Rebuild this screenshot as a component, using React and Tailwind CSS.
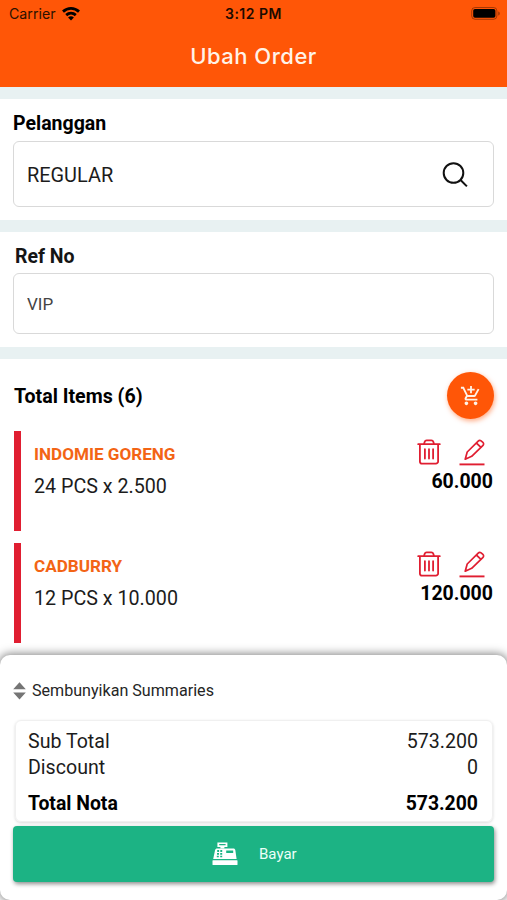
import { useState } from "react"
import { MdAddShoppingCart } from "react-icons/md"

const items = [
  { id: 1, name: "INDOMIE GORENG", detail: "24 PCS x 2.500", total: "60.000" },
  { id: 2, name: "CADBURRY", detail: "12 PCS x 10.000", total: "120.000" },
]

function WifiIcon() {
  return (
    <svg className="h-[14px] w-[18px]" viewBox="0 0 18 14" fill="none" stroke="currentColor" strokeWidth="2.8">
      <path d="M1 4.6C5.6 .4 12.4 .4 17 4.6" />
      <path d="M4.2 8.1c2.8-2.5 6.800-2.500 9.600 0" />
      <path d="M9 13.500l-2.900-3.100c1.700-1.400 4.100-1.400 5.800 0z" fill="currentColor" stroke="none" />
    </svg>
  )
}

function BatteryIcon() {
  return (
    <svg className="h-[14px] w-[30px]" viewBox="0 0 30 14" fill="none">
      <rect x="0.7" y="0.5" width="25.2" height="11.8" rx="3.4" stroke="#000" strokeOpacity=".35" />
      <rect x="2.2" y="2" width="22.2" height="8.8" rx="1.8" fill="#000" />
      <path d="M27.2 4.6c2.2.8 2.2 3.2 0 4z" fill="#000" fillOpacity=".35" />
    </svg>
  )
}

function SearchIcon() {
  return (
    <svg className="h-[26px] w-[26px]" viewBox="0 0 26 26" fill="none" stroke="#111" strokeWidth="2">
      <circle cx="11.5" cy="11" r="9.8" />
      <path d="M18.300 17.800l6.600 6.600" />
    </svg>
  )
}

function TrashIcon() {
  return (
    <svg className="h-[26px] w-[24px]" viewBox="0 0 24 26" fill="none" stroke="currentColor" strokeWidth="1.8">
      <path d="M1.200 5.200h21.600" strokeLinecap="round" />
      <path d="M2.900 5.200v17.200a2.200 2.200 0 0 0 2.200 2.200h13.800a2.200 2.200 0 0 0 2.200-2.200V5.200" />
      <path d="M7 5l.7-2.300a2 2 0 0 1 1.900-1.400h4.800a2 2 0 0 1 1.900 1.400L17 5" />
      <path d="M7.900 10.200v9.300M12 10.200v9.300M16.100 10.200v9.300" strokeLinecap="round" />
    </svg>
  )
}

function EditIcon() {
  return (
    <svg className="h-[27px] w-[26px]" viewBox="0 0 26 27" fill="none" stroke="currentColor" strokeWidth="1.7" strokeLinejoin="round">
      <path d="M6.200 20.200l2-7.200L19.200 2.100a2.200 2.200 0 0 1 2.900-.2l1.800 1.500a2 2 0 0 1 .1 2.900L12.700 17.300z" />
      <path d="M17.300 4l4.700 4.300" />
      <path d="M0.500 25.400h25" strokeWidth="1.900" />
    </svg>
  )
}

function SortIcon() {
  return (
    <svg className="h-[18px] w-[13px]" viewBox="0 0 13 18" fill="#757575">
      <path d="M6.500 .2l6.300 7H.2zM6.500 17.500L.2 10.500h12.600z" />
    </svg>
  )
}

function RegisterIcon() {
  return (
    <svg className="h-[24px] w-[26px]" viewBox="0 0 26 24" fill="#fff">
      <path fillRule="evenodd" d="M5.400.6h10v4.300h-3v1.700H8.400V4.900h-3zM7.200 2.100v1.200h6.400V2.100z" />
      <path
        fillRule="evenodd"
        d="M5.200 6.400h16.200c1 0 1.700.6 1.900 1.500l1.300 9.100H1.200l1.900-9.100c.2-.9 1-1.500 2.100-1.500zM5.200 8.100v1.800h1.900V8.100zM8.300 8.100v1.800h1.900V8.100zM5 11v1.800h2V11zM8.200 11v1.800h2V11zM4.800 13.800v1.400h2v-1.400zM8.200 13.800v1.400h2v-1.400zM14.200 8.500v2.400h7V8.500z"
      />
      <rect x="0.500" y="18.200" width="25" height="4.900" rx="0.500" />
    </svg>
  )
}

function ItemRow({ item }) {
  return (
    <li className="flex h-[100px] border-l-[7.5px] border-[#e01e31] pl-[13px]">
      <div className="flex-1 pt-[11px]">
        <p className="text-[17.1px] leading-6 font-bold text-[#f36415]">{item.name}</p>
        <p className="mt-[9px] text-[19.7px] leading-6 text-[#1c1c1c]">{item.detail}</p>
      </div>
      <div className="flex flex-col items-end pt-2">
        <div className="flex items-start gap-[18px] pr-2 text-[#e01e31]">
          <button type="button" aria-label="hapus">
            <TrashIcon />
          </button>
          <button type="button" aria-label="ubah">
            <EditIcon />
          </button>
        </div>
        <p className="mt-1 text-[19.5px] leading-6 font-bold">{item.total}</p>
      </div>
    </li>
  )
}

function SummaryRow({ label, value, bold }) {
  return (
    <div
      className={`flex justify-between leading-[26px] ${
        bold ? "mt-[10px] text-[19.4px] font-bold text-black" : "text-[19.6px] text-[#1c1c1c]"
      }`}
    >
      <span>{label}</span>
      <span>{value}</span>
    </div>
  )
}

function App() {
  const [customer] = useState("REGULAR")
  const [refNo, setRefNo] = useState("VIP")
  const [open, setOpen] = useState(true)

  return (
    <div className="flex h-[900px] w-[507px] flex-col overflow-hidden bg-white font-[Roboto,sans-serif] text-black">
      <header className="h-[87px] shrink-0 bg-[#ff5607]">
        <div className="grid h-7 grid-cols-3 items-center pr-[6px] pl-[9px] font-[Inter,sans-serif]">
          <div className="flex items-center gap-[6px]">
            <span className="text-[14.2px] text-[#2b1100]">Carrier</span>
            <WifiIcon />
          </div>
          <span className="-ml-[3px] -mt-px text-center text-[14px] font-semibold tracking-[0.5px] text-[#1c0a00]">
            3:12 PM
          </span>
          <div className="flex justify-end">
            <BatteryIcon />
          </div>
        </div>
        <h1 className="pt-3 text-center font-[Inter,sans-serif] text-[22px] leading-8 font-medium tracking-[0.5px] text-[#fff3e8]">
          Ubah Order
        </h1>
      </header>

      <main className="flex flex-1 flex-col gap-3 bg-[#e8f1f2] pt-3">
        <section className="h-[121px] bg-white px-[13px] pt-[13px]">
          <h2 className="text-[19.5px] leading-6 font-bold">Pelanggan</h2>
          <div className="mt-[5px] flex h-[66px] items-center justify-between rounded-md border border-[#d9d9d9] pt-[2px] pr-[25px] pl-[13px]">
            <span className="pt-[2px] text-[19.9px] text-[#1c1c1c]">{customer}</span>
            <SearchIcon />
          </div>
        </section>

        <section className="h-[115px] bg-white px-[13px] pt-[13px]">
          <h2 className="pl-[2px] text-[19.5px] leading-6 font-bold text-[#151515]">Ref No</h2>
          <input
            value={refNo}
            onChange={(e) => setRefNo(e.target.value)}
            className="mt-1 h-[61px] w-full rounded-md border border-[#d9d9d9] px-[13px] text-[17px] text-[#444] outline-none"
          />
        </section>

        <section className="flex-1 bg-white px-[14px] pt-[13px]">
          <div className="flex h-[47px] items-center justify-between">
            <h2 className="pt-[2px] text-[19.6px] font-bold">Total Items (6)</h2>
            <button
              type="button"
              aria-label="tambah item"
              className="-mr-px flex size-[47px] items-center justify-center rounded-full bg-[#ff5607] text-[#fff3e8] shadow-[1px_2px_5px_rgba(255,86,7,0.5)]"
            >
              <MdAddShoppingCart size={22} />
            </button>
          </div>
          <ul className="mt-3 flex h-[212px] flex-col gap-[12.5px]">
            {items.map((item) => (
              <ItemRow key={item.id} item={item} />
            ))}
          </ul>
        </section>
      </main>

      <footer className="shrink-0 bg-white">
        <div className="relative h-[245px] rounded-[10px] bg-white px-[13px] pt-6 shadow-[0_0_10px_1px_rgba(0,0,0,0.5)]">
          <button type="button" onClick={() => setOpen((o) => !o)} className="flex h-6 items-center gap-[6px]">
            <SortIcon />
            <span className="text-[16.1px] text-[#252525]">Sembunyikan Summaries</span>
          </button>
          {open && (
            <div className="mr-px ml-[2px] mt-[17px] h-[102px] rounded-md border border-[#f0f0f0] pt-2 pr-[14px] pl-3 shadow-[0_1px_3px_rgba(0,0,0,0.15)]">
              <SummaryRow label="Sub Total" value="573.200" />
              <SummaryRow label="Discount" value="0" />
              <SummaryRow label="Total Nota" value="573.200" bold />
            </div>
          )}
          <button
            type="button"
            className="mt-1 flex h-[56px] w-full items-center rounded-[4px] bg-[#1cb384] pl-[199px] text-[15px] text-[#ecfff8] shadow-[1px_2px_4px_rgba(0,0,0,0.45)]"
          >
            <RegisterIcon />
            <span className="ml-[21px] pt-px">Bayar</span>
          </button>
        </div>
      </footer>
    </div>
  )
}

export default App
